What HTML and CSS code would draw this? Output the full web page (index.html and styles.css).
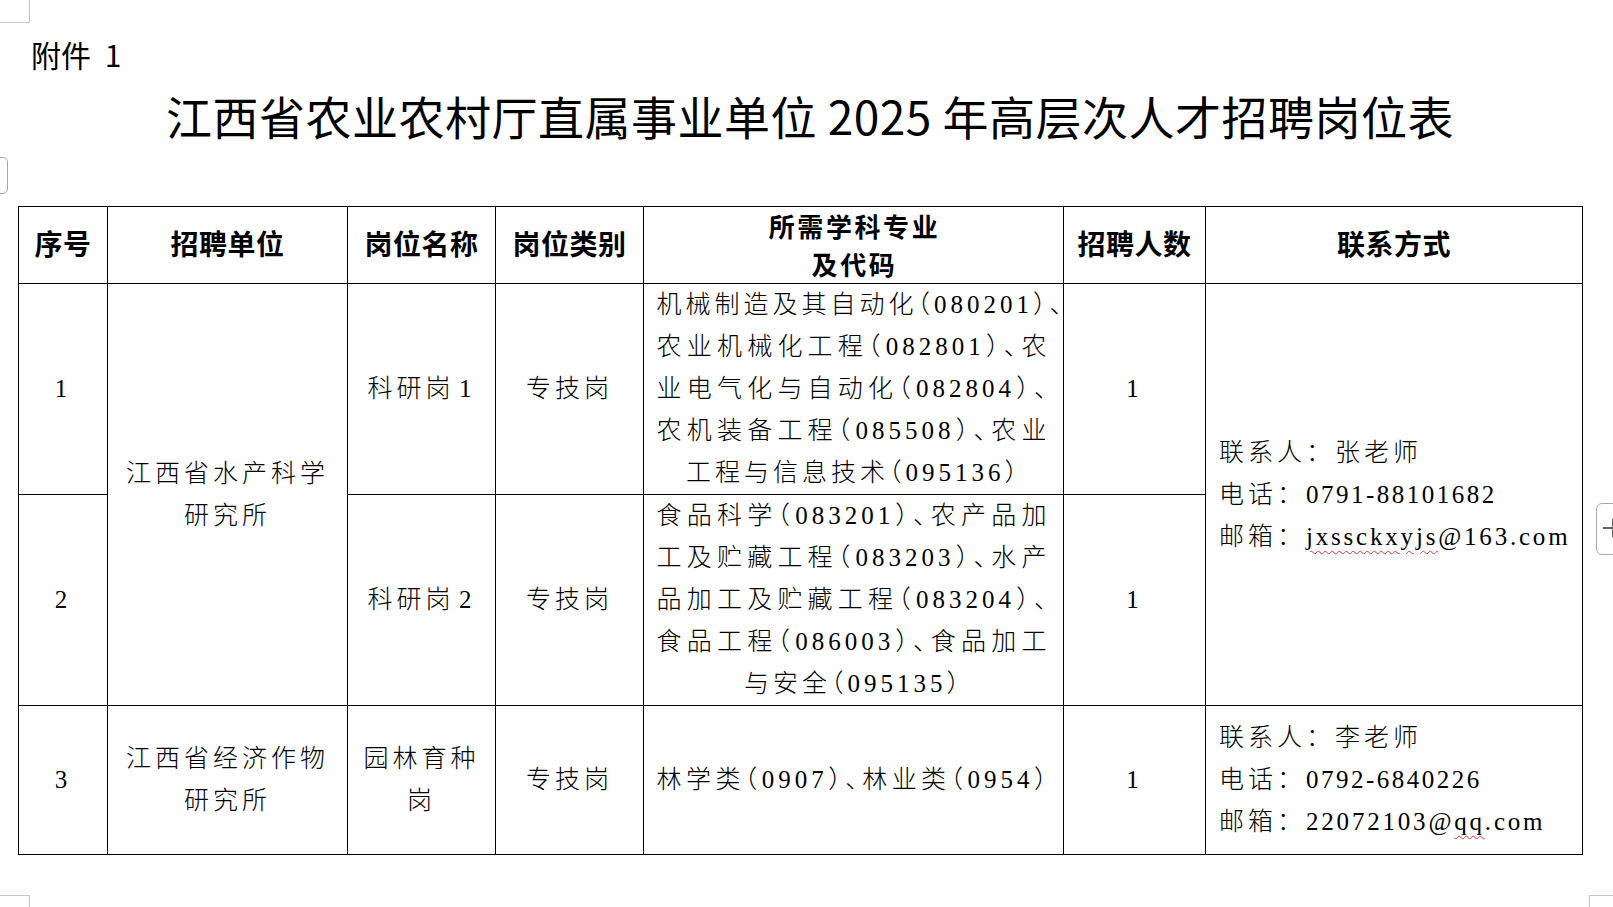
FILE: index.html
```html
<!DOCTYPE html>
<html lang="zh-CN">
<head>
<meta charset="utf-8">
<title>江西省农业农村厅直属事业单位2025年高层次人才招聘岗位表</title>
<link rel="stylesheet" href="styles.css">
</head>
<body>
<div class="mark mark-tl"></div>
<div class="mark mark-bl"></div>
<div class="mark mark-br"></div>
<div class="handle-l"></div>
<div class="handle-r"></div>

<p class="annex">附件 1</p>
<h1 class="title">江西省农业农村厅直属事业单位 2025 年高层次人才招聘岗位表</h1>

<table class="jobs">
  <colgroup>
    <col class="c-no">
    <col class="c-unit">
    <col class="c-post">
    <col class="c-cat">
    <col class="c-major">
    <col class="c-count">
    <col class="c-contact">
  </colgroup>
  <thead>
    <tr class="hd">
      <th>序号</th>
      <th>招聘单位</th>
      <th>岗位名称</th>
      <th>岗位类别</th>
      <th class="two">所需学科专业<br>及代码</th>
      <th>招聘人数</th>
      <th>联系方式</th>
    </tr>
  </thead>
  <tbody>
    <tr class="r1">
      <td class="num"><span class="d">1</span></td>
      <td class="unit" rowspan="2">江西省水产科学<br>研究所</td>
      <td class="post">科研岗 <span class="d">1</span></td>
      <td>专技岗</td>
      <td class="major">
        <div class="ln over">机械制造及其自动化（<span class="d">080201</span>）、</div>
        <div class="ln">农业机械化工程（<span class="d">082801</span>）、农</div>
        <div class="ln">业电气化与自动化（<span class="d">082804</span>）、</div>
        <div class="ln">农机装备工程（<span class="d">085508</span>）、农业</div>
        <div class="ln last">工程与信息技术（<span class="d">095136</span>）</div>
      </td>
      <td class="num"><span class="d">1</span></td>
      <td class="contact" rowspan="2">
        <div>联系人：张老师</div>
        <div>电话：<span class="lat">0791-88101682</span></div>
        <div>邮箱：<span class="lat mail"><span class="sq">jxssckxyjs</span>@163.com</span></div>
      </td>
    </tr>
    <tr class="r2">
      <td class="num"><span class="d">2</span></td>
      <td class="post">科研岗 <span class="d">2</span></td>
      <td>专技岗</td>
      <td class="major">
        <div class="ln">食品科学（<span class="d">083201</span>）、农产品加</div>
        <div class="ln">工及贮藏工程（<span class="d">083203</span>）、水产</div>
        <div class="ln">品加工及贮藏工程（<span class="d">083204</span>）、</div>
        <div class="ln">食品工程（<span class="d">086003</span>）、食品加工</div>
        <div class="ln last">与安全（<span class="d">095135</span>）</div>
      </td>
      <td class="num"><span class="d">1</span></td>
    </tr>
    <tr class="r3">
      <td class="num"><span class="d">3</span></td>
      <td class="unit">江西省经济作物<br>研究所</td>
      <td class="post">园林育种<br>岗</td>
      <td>专技岗</td>
      <td class="major">
        <div class="ln">林学类（<span class="d">0907</span>）、林业类（<span class="d">0954</span>）</div>
      </td>
      <td class="num"><span class="d">1</span></td>
      <td class="contact">
        <div>联系人：李老师</div>
        <div>电话：<span class="lat">0792-6840226</span></div>
        <div>邮箱：<span class="lat mail">22072103@<span class="sq">qq</span>.com</span></div>
      </td>
    </tr>
  </tbody>
</table>
</body>
</html>
```

FILE: styles.css
```css
* {
  box-sizing: border-box;
}

html, body {
  margin: 0;
  padding: 0;
  background: #ffffff;
}

body {
  position: relative;
  width: 1613px;
  height: 907px;
  overflow: hidden;
  color: #000000;
  font-family: "Noto Sans CJK SC", "Liberation Sans", sans-serif;
}

/* page decorations (Word corner marks / side handles) */
.mark {
  position: absolute;
  border: 0 solid #c8c8c8;
}
.mark-tl {
  left: 0;
  top: 0;
  width: 30px;
  height: 23px;
  border-right-width: 1px;
  border-bottom-width: 1px;
}
.mark-bl {
  left: 0;
  top: 895px;
  width: 30px;
  height: 12px;
  border-right-width: 1px;
  border-top-width: 1px;
}
.mark-br {
  left: 1589px;
  top: 895px;
  width: 24px;
  height: 12px;
  border-left-width: 1px;
  border-top-width: 1px;
}
.handle-l {
  position: absolute;
  left: -12px;
  top: 157px;
  width: 20px;
  height: 37px;
  border: 1.5px solid #a8a8a8;
  border-radius: 5px;
}
.handle-r {
  position: absolute;
  left: 1596px;
  top: 503px;
  width: 34px;
  height: 52px;
  border: 1.5px solid #a8a8a8;
  border-radius: 6px;
}
.handle-r::before {
  content: "";
  position: absolute;
  left: 6px;
  top: 23px;
  width: 18px;
  height: 1.5px;
  background: #666666;
}
.handle-r::after {
  content: "";
  position: absolute;
  left: 14.5px;
  top: 15px;
  width: 1.5px;
  height: 18px;
  background: #666666;
}

.annex {
  margin: 0;
  padding: 34px 0 0 31px;
  font-size: 30px;
  line-height: 40px;
  font-weight: 400;
  word-spacing: 7px;
}

.title {
  margin: 11px 0 0;
  padding-left: 7px;
  font-size: 46px;
  line-height: 60px;
  font-weight: 400;
  letter-spacing: 0.5px;
  text-align: center;
}

.jobs {
  margin: 61px 0 0 18px;
  width: 1564px;
  border-collapse: collapse;
  table-layout: fixed;
}

.c-no { width: 89px; }
.c-unit { width: 240px; }
.c-post { width: 148px; }
.c-cat { width: 148px; }
.c-major { width: 420px; }
.c-count { width: 142px; }
.c-contact { width: 377px; }

.jobs th,
.jobs td {
  border: 1.5px solid #000000;
  padding: 0;
  vertical-align: middle;
  text-align: center;
}

.jobs th {
  font-family: "Noto Sans CJK SC", sans-serif;
  font-size: 28px;
  line-height: 36px;
  font-weight: 700;
  letter-spacing: 0.5px;
  padding-bottom: 4px;
}

.jobs th.two {
  font-size: 26px;
  line-height: 38px;
  letter-spacing: 2.6px;
  padding: 0 0 0 2px;
}

.jobs td {
  font-family: "Liberation Serif", "Noto Sans CJK SC", serif;
  font-size: 25px;
  line-height: 42px;
  font-weight: 300;
  letter-spacing: 4px;
}

.hd { height: 76px; }
.r1 { height: 211px; }
.r2 { height: 210px; }
.r3 { height: 149px; }

.d,
.lat {
  font-family: "Liberation Serif", serif;
  font-weight: 400;
}

.post {
  word-spacing: -6px;
}

.major {
  font-feature-settings: "halt";
}

.ln {
  width: 394px;
  margin: 0 auto;
  text-align: justify;
  text-align-last: justify;
}
.ln.over {
  white-space: nowrap;
  text-align: left;
  text-align-last: left;
}
.ln.last {
  text-align: center;
  text-align-last: center;
}

.contact {
  text-align: left !important;
  padding-left: 13px !important;
}

.lat {
  letter-spacing: 2.5px;
}
.lat.mail {
  letter-spacing: 2.8px;
}

.sq {
  text-decoration: underline wavy #d83a3a;
  text-decoration-thickness: 1px;
  text-underline-offset: 5px;
}
```
